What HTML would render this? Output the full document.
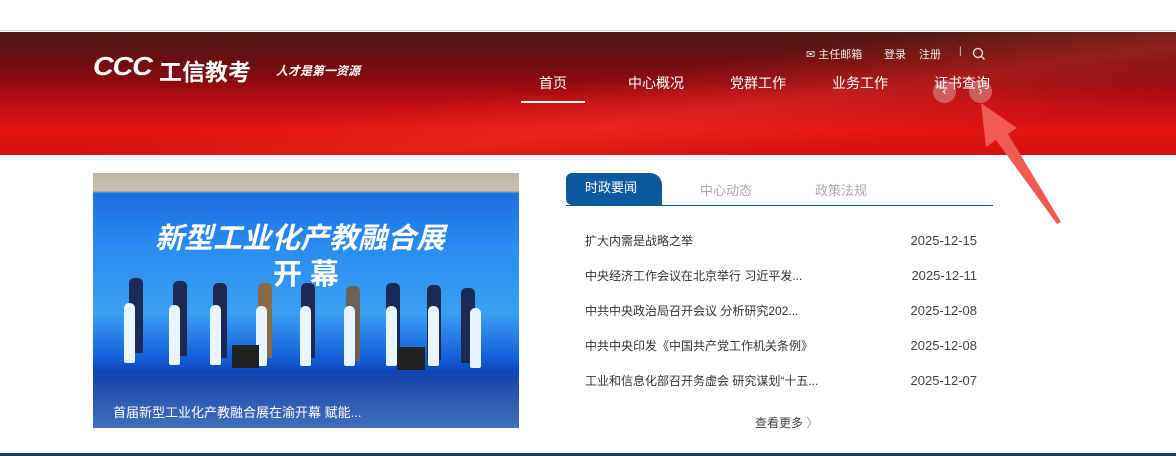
<!DOCTYPE html>
<html><head><meta charset="utf-8"><style>
*{margin:0;padding:0;box-sizing:border-box}
body{width:1176px;height:456px;overflow:hidden;background:#fff;font-family:"Liberation Sans","Noto Sans CJK SC",sans-serif;position:relative}
.top{position:absolute;left:0;top:0;width:1176px;height:31px;background:#fff;border-bottom:1px solid #ddd}
.ban{position:absolute;left:0;top:32px;width:1176px;height:123px;background:linear-gradient(180deg,#4e1a14 0%,#6e0d10 25%,#8a0a10 40%,#c00e10 58%,#e2160f 80%,#d4110e 100%)}
.ban:before{content:"";position:absolute;inset:0;background:linear-gradient(172deg,transparent 45%,rgba(255,70,50,.3) 62%,transparent 80%)}
.ab{position:absolute;color:#fff;white-space:nowrap}
.nav{font-size:14px}
.list div{position:absolute;left:585px;font-size:12px;line-height:16px;color:#333;width:410px}
.list span{position:absolute;right:18px;top:0;color:#444;font-size:13px;line-height:16px}
.p{position:absolute;width:14px;height:75px;background:#1b2a55;border-radius:5px 5px 0 0}
.c{position:absolute;width:11px;height:60px;background:#e8f4ff;border-radius:5px 5px 2px 2px}
</style></head><body>
<div class="top"></div>
<div class="ban"></div>
<div class="ab" style="left:93px;top:51px;font-size:26px;font-weight:bold;font-style:italic;letter-spacing:-1px;transform:scaleX(1.1);transform-origin:left">CCC</div>
<div class="ab" style="left:159px;top:53px;font-size:23px;font-weight:bold">工信教考</div>
<div class="ab" style="left:276px;top:62px;font-size:12px;font-style:italic;font-weight:bold">人才是第一资源</div>
<div class="ab" style="left:806px;top:46px;font-size:11px;color:#eee">✉ 主任邮箱</div>
<div class="ab" style="left:884px;top:46px;font-size:11px;color:#eee">登录</div>
<div class="ab" style="left:919px;top:46px;font-size:11px;color:#eee">注册</div>
<div class="ab" style="left:959px;top:46px;font-size:10px;color:#ddd">|</div>
<svg style="position:absolute;left:972px;top:47px" width="14" height="14"><circle cx="6" cy="6" r="4.5" stroke="#ddd" stroke-width="1.4" fill="none"/><path d="M9.5 9.5l3 3" stroke="#ddd" stroke-width="1.4"/></svg>
<div class="ab nav" style="left:539px;top:73px">首页</div>
<div style="position:absolute;left:521px;top:101px;width:64px;height:2px;background:#fff"></div>
<div class="ab nav" style="left:628px;top:73px">中心概况</div>
<div class="ab nav" style="left:730px;top:73px">党群工作</div>
<div class="ab nav" style="left:832px;top:73px">业务工作</div>
<div class="ab nav" style="left:934px;top:73px">证书查询</div>
<div style="position:absolute;left:933px;top:80px;width:23px;height:23px;border-radius:50%;background:rgba(255,255,255,.3);color:#fff;font-size:12px;text-align:center;line-height:23px">‹</div>
<div style="position:absolute;left:969px;top:80px;width:23px;height:23px;border-radius:50%;background:rgba(255,255,255,.3);color:#fff;font-size:12px;text-align:center;line-height:23px">›</div>
<div style="position:absolute;left:93px;top:173px;width:426px;height:255px;background:linear-gradient(180deg,#bdb7a8 0%,#c7bfa8 7%,#1a6fe0 8%,#2b8cf0 30%,#3aa0f0 55%,#1560d8 72%,#0b3db0 80%,#1a56c0 100%);overflow:hidden">
<div style="position:absolute;left:62px;top:42px;color:#fff;font-size:29px;font-weight:bold;font-style:italic">新型工业化产教融合展</div>
<div style="position:absolute;left:180px;top:78px;color:#fff;font-size:29px;font-weight:bold">开 幕</div>
<div class="p" style="left:36px;top:105px"></div><div class="c" style="left:31px;top:130px"></div>
<div class="p" style="left:80px;top:108px"></div><div class="c" style="left:76px;top:132px"></div>
<div class="p" style="left:120px;top:110px"></div><div class="c" style="left:117px;top:132px"></div>
<div class="p" style="left:165px;top:110px;background:#8a6a45"></div><div class="c" style="left:163px;top:133px"></div>
<div class="p" style="left:208px;top:110px"></div><div class="c" style="left:207px;top:133px"></div>
<div class="p" style="left:253px;top:113px;background:#6a6255"></div><div class="c" style="left:251px;top:133px"></div>
<div class="p" style="left:293px;top:110px"></div><div class="c" style="left:293px;top:133px"></div>
<div class="p" style="left:334px;top:112px"></div><div class="c" style="left:335px;top:133px"></div>
<div class="p" style="left:368px;top:115px"></div><div class="c" style="left:377px;top:135px"></div>
<div style="position:absolute;left:139px;top:172px;width:27px;height:23px;background:#222"></div>
<div style="position:absolute;left:304px;top:174px;width:28px;height:23px;background:#222"></div>
<div style="position:absolute;left:0;top:200px;width:426px;height:55px;background:linear-gradient(180deg,rgba(40,80,160,.3),rgba(80,120,180,.7))"></div>
<div style="position:absolute;left:20px;top:229px;color:#fff;font-size:13px">首届新型工业化产教融合展在渝开幕 赋能...</div>
</div>
<div style="position:absolute;left:566px;top:173px;width:96px;height:32px;background:#0b5aa0;border-radius:6px 12px 0 6px;color:#fff;font-size:13px;line-height:29px;padding-left:19px">时政要闻</div>
<div style="position:absolute;left:566px;top:205px;width:427px;height:1px;background:#0b5aa0"></div>
<div class="ab" style="left:700px;top:180px;font-size:13px;color:#aaa">中心动态</div>
<div class="ab" style="left:815px;top:180px;font-size:13px;color:#aaa">政策法规</div>
<div class="list">
<div style="top:233px">扩大内需是战略之举<span>2025-12-15</span></div>
<div style="top:268px">中央经济工作会议在北京举行 习近平发...<span>2025-12-11</span></div>
<div style="top:303px">中共中央政治局召开会议 分析研究202...<span>2025-12-08</span></div>
<div style="top:338px">中共中央印发《中国共产党工作机关条例》<span>2025-12-08</span></div>
<div style="top:373px">工业和信息化部召开务虚会 研究谋划“十五...<span>2025-12-07</span></div>
</div>
<div class="ab" style="left:755px;top:414px;font-size:12px;color:#444">查看更多 <span style="color:#999">〉</span></div>
<div style="position:absolute;left:0;top:453px;width:1176px;height:3px;background:#1b3f63"></div>
<svg style="position:absolute;left:970px;top:95px" width="100" height="130"><path d="M91 127 L38 39 L47 33 L11 8 L16 52 L26 45 L87 129 Z" fill="#f05a52"/></svg>
</body></html>
